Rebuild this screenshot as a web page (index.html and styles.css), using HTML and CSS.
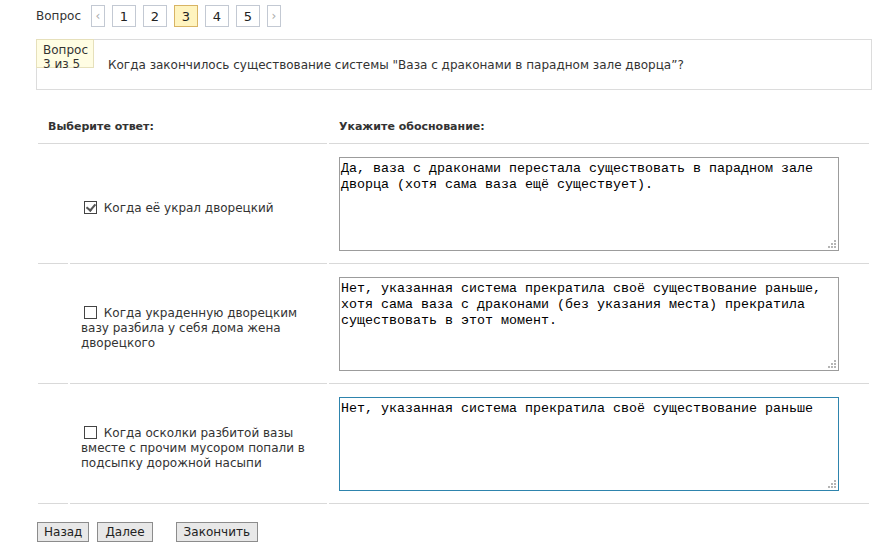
FILE: index.html
```html
<!DOCTYPE html>
<html lang="ru">
<head>
    <meta charset="UTF-8">
    <title>Тест</title>
    <link rel="stylesheet" href="styles.css">
</head>
<body>
    <div class="page">
        <div class="pager">
            <span class="pager-label">Вопрос</span>
            <a class="pager-item pager-arrow">&lsaquo;</a>
            <a class="pager-item">1</a>
            <a class="pager-item">2</a>
            <a class="pager-item current">3</a>
            <a class="pager-item">4</a>
            <a class="pager-item">5</a>
            <a class="pager-item pager-arrow">&rsaquo;</a>
        </div>

        <div class="question">
            <div class="question-num">Вопрос<br>3 из 5</div>
            <div class="question-text">Когда закончилось существование системы "Ваза с драконами в парадном зале дворца”?</div>
        </div>

        <table class="answers">
            <tr>
                <th colspan="2" class="head-answer">Выберите ответ:</th>
                <th class="head-reason">Укажите обоснование:</th>
            </tr>
            <tr>
                <td class="num"></td>
                <td class="answer">
                    <label><input type="checkbox" checked> Когда её украл дворецкий</label>
                </td>
                <td class="reason">
                    <div class="reason-box">
                        <textarea>Да, ваза с драконами перестала существовать в парадном зале дворца (хотя сама ваза ещё существует).</textarea>
                        <span class="grip"></span>
                    </div>
                </td>
            </tr>
            <tr>
                <td class="num"></td>
                <td class="answer">
                    <label><input type="checkbox"> Когда украденную дворецким вазу разбила у себя дома жена дворецкого</label>
                </td>
                <td class="reason">
                    <div class="reason-box">
                        <textarea>Нет, указанная система прекратила своё существование раньше, хотя сама ваза с драконами (без указания места) прекратила существовать в этот момент.</textarea>
                        <span class="grip"></span>
                    </div>
                </td>
            </tr>
            <tr>
                <td class="num"></td>
                <td class="answer">
                    <label><input type="checkbox"> Когда осколки разбитой вазы вместе с прочим мусором попали в подсыпку дорожной насыпи</label>
                </td>
                <td class="reason">
                    <div class="reason-box">
                        <textarea class="active">Нет, указанная система прекратила своё существование раньше</textarea>
                        <span class="grip"></span>
                    </div>
                </td>
            </tr>
        </table>

        <div class="buttons">
            <button class="btn">Назад</button>
            <button class="btn">Далее</button>
            <button class="btn btn-finish">Закончить</button>
        </div>
    </div>
</body>
</html>
```

FILE: styles.css
```css
body {
    margin: 0;
    font-family: "DejaVu Sans", Verdana, sans-serif;
    font-size: 12px;
    color: #333;
    background: #fff;
}

.page {
    padding: 5px 9px 0 36px;
}

/* question pager */
.pager {
    display: flex;
    align-items: center;
    height: 22px;
}

.pager-label {
    margin-right: 10px;
}

.pager-item {
    box-sizing: border-box;
    width: 24px;
    height: 22px;
    margin-right: 7px;
    border: 1px solid #c3c9d3;
    display: flex;
    align-items: center;
    justify-content: center;
    color: #222;
    font-size: 13px;
}

.pager-arrow {
    width: 14px;
    color: #aaa;
    font-size: 12px;
}

.pager-item.current {
    background: #fff4bf;
    border-color: #d8b464;
}

/* question block */
.question {
    margin-top: 12px;
    height: 51px;
    box-sizing: border-box;
    border: 1px solid #dcdcdc;
    display: flex;
    align-items: flex-start;
}

.question-num {
    box-sizing: border-box;
    width: 58px;
    height: 29px;
    margin: -1px 0 0 -1px;
    padding: 3px 0 0 6px;
    line-height: 14px;
    background: #fffde3;
    border: 1px solid #e6e0bb;
}

.question-text {
    padding: 18px 0 0 14px;
    line-height: 14px;
}

/* answers table */
.answers {
    margin-top: 20px;
    width: 835px;
    border-collapse: separate;
    border-spacing: 2px 0;
}

.answers th {
    height: 33px;
    padding: 0 10px;
    text-align: left;
    font-weight: bold;
    font-size: 11px;
    color: #333;
    border-bottom: 1px solid #d9d9d9;
}

.answers td {
    border-bottom: 1px solid #d9d9d9;
    padding: 0;
}

.num {
    width: 30px;
}

.answer {
    width: 257px;
    padding: 10px 10px 0 11px !important;
    box-sizing: border-box;
    line-height: 15px;
}

.answer input {
    appearance: none;
    -webkit-appearance: none;
    position: relative;
    width: 13px;
    height: 13px;
    margin: 0 3px 0 3px;
    border: 1px solid #444;
    background: #fff;
    vertical-align: -2px;
}

.answer input:checked::after {
    content: "";
    position: absolute;
    left: 3px;
    top: 0;
    width: 4px;
    height: 7px;
    border-right: 2px solid #555;
    border-bottom: 2px solid #555;
    transform: rotate(40deg);
}

.reason {
    padding: 13px 10px 12px 10px !important;
}

.reason-box {
    position: relative;
    width: 500px;
    height: 94px;
}

.reason-box textarea {
    box-sizing: border-box;
    width: 500px;
    height: 94px;
    margin: 0;
    padding: 3px 1px;
    border: 1px solid #9c9c9c;
    font-family: "Liberation Mono", "Courier New", monospace;
    font-size: 13.33px;
    line-height: 16px;
    color: #000;
    resize: none;
    outline: none;
    display: block;
}

.reason-box textarea.active {
    border-color: #2e84ad;
}

/* dotted resize corner: three rows of 2px dots */
.grip {
    position: absolute;
    right: 9px;
    bottom: 9px;
    width: 2px;
    height: 2px;
    background: transparent;
    box-shadow:
        6px 0 #b5b5b5,
        3px 3px #b5b5b5, 6px 3px #b5b5b5,
        0 6px #b5b5b5, 3px 6px #b5b5b5, 6px 6px #b5b5b5;
}

/* bottom buttons */
.buttons {
    margin-top: 18px;
    display: flex;
    padding-left: 1px;
}

.btn {
    height: 20px;
    padding: 0 7px;
    margin-right: 8px;
    font-family: "DejaVu Sans", Verdana, sans-serif;
    font-size: 12px;
    color: #222;
    background: #e8e8e8;
    border: 1px solid #8c8c8c;
    border-radius: 0;
}

.btn:first-child {
    padding: 0 6px;
}

.btn-finish {
    margin-left: 15px;
    padding: 0 7px;
}
```
